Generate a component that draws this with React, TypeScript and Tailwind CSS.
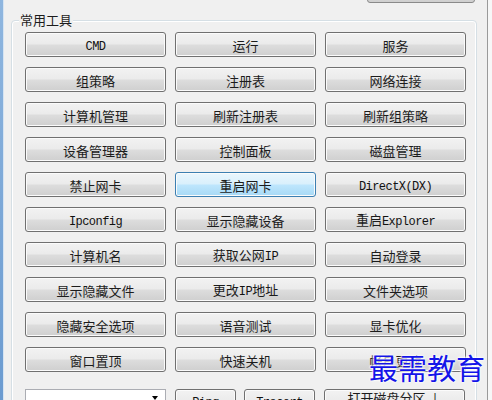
import React from "react";

const CJK = "'Noto Sans CJK SC', 'Liberation Sans', sans-serif";
const MONO = "'Liberation Mono', monospace";

function Label({ text }: { text: string }) {
  const parts = text.match(/[A-Za-z0-9()]+|[^A-Za-z0-9()]+/g) || [];
  return (
    <span className="whitespace-nowrap leading-none">
      {parts.map((p, i) =>
        /^[A-Za-z0-9()]+$/.test(p) ? (
          <span key={i} className="text-[12px] tracking-[-0.55px] text-[#111]" style={{ fontFamily: MONO }}>
            {p}
          </span>
        ) : (
          <span key={i} className="text-[13px]" style={{ fontFamily: CJK }}>
            {p}
          </span>
        )
      )}
    </span>
  );
}

const normal =
  "border-[#707070] bg-[linear-gradient(#f2f2f2,#ebebeb_48%,#dddddd_52%,#cfcfcf)]";
const hot =
  "border-[#3c7fb1] bg-[linear-gradient(#eaf6fd,#d9f0fc_48%,#bee6fd_52%,#a7d9f5)]";

function Btn({ text, hover, className = "" }: { text: string; hover?: boolean; className?: string }) {
  return (
    <div
      className={`h-[25px] shrink-0 flex items-center justify-center rounded-[3px] border text-[#1c1c1c] shadow-[inset_0_0_0_1px_#fbfbfb] ${hover ? hot : normal} ${className}`}
    >
      <Label text={text} />
    </div>
  );
}

const items = [
  "CMD", "运行", "服务",
  "组策略", "注册表", "网络连接",
  "计算机管理", "刷新注册表", "刷新组策略",
  "设备管理器", "控制面板", "磁盘管理",
  "禁止网卡", "重启网卡", "DirectX(DX)",
  "Ipconfig", "显示隐藏设备", "重启Explorer",
  "计算机名", "获取公网IP", "自动登录",
  "显示隐藏文件", "更改IP地址", "文件夹选项",
  "隐藏安全选项", "语音测试", "显卡优化",
  "窗口置顶", "快速关机", "帐户更改",
];

export default function App() {
  return (
    <div className="w-[492px] h-[400px] overflow-hidden flex bg-[#f0f0f0] relative">
      <div className="w-[3px] shrink-0 bg-[linear-gradient(#8fb6df,#6b9bd0)]" />
      <div className="w-[1px] shrink-0 bg-[#d6e4f2]" />
      <div className="flex-1 flex flex-col">
        <div className="shrink-0 ml-[363px] w-[108px] h-[24px] -mt-[21px] rounded-[3px] border border-[#8a8a8a] bg-[linear-gradient(#f2f2f2,#ebebeb_48%,#dddddd_52%,#cfcfcf)]" />
        <div className="shrink-0 relative ml-[7px] mt-[17px] w-[466px] h-[420px] rounded-[4px] border border-[#d5dfe5] shadow-[inset_0_0_0_1px_#ffffff]">
          <div
            className="absolute -top-[9px] left-[7px] px-[1px] bg-[#f0f0f0] text-[13px] leading-[16px] text-[#1c1c1c]"
            style={{ fontFamily: CJK }}
          >
            常用工具
          </div>
          <div className="pl-[13px] pt-[11px]">
            <div className="grid grid-cols-[141px_141px_141px] gap-x-[9px] gap-y-[10px]">
              {items.map((t) => (
                <Btn key={t} text={t} hover={t === "重启网卡"} />
              ))}
            </div>
            <div className="flex mt-[17px]">
              <div className="w-[141px] h-[23px] shrink-0 border border-[#abadb3] bg-white relative">
                <div className="absolute right-[7px] top-[6px] w-0 h-0 border-l-[3px] border-r-[3px] border-t-[4px] border-l-transparent border-r-transparent border-t-black" />
              </div>
              <Btn text="Ping" className="ml-[9px] w-[61px] items-start pt-[2px]" />
              <Btn text="Tracert" className="ml-[8px] w-[71px] items-start pt-[2px]" />
              <div className="shrink-0 ml-[9px] w-[141px] h-[25px] rounded-[3px] border border-[#707070] bg-[linear-gradient(#f2f2f2,#ebebeb_48%,#dddddd_52%,#cfcfcf)] shadow-[inset_0_0_0_1px_#fbfbfb] flex justify-center pt-[1px] text-[#1c1c1c]">
                <span className="text-[13px] leading-none" style={{ fontFamily: CJK }}>
                  打开磁盘分区 ↓
                </span>
              </div>
            </div>
          </div>
        </div>
      </div>
      <div className="w-[1px] shrink-0 bg-[#9a9a9a]" />
      <div className="w-[4px] shrink-0 bg-[#f7f7f7]" />
      <div
        className="absolute left-[369px] top-[353px] text-[29px] leading-none text-[#1414e8] [text-shadow:0_0_2px_#fff,0_0_2px_#fff,0_0_3px_#fff]"
        style={{ fontFamily: "'Noto Sans CJK SC', serif" }}
      >
        最需教育
      </div>
    </div>
  );
}
